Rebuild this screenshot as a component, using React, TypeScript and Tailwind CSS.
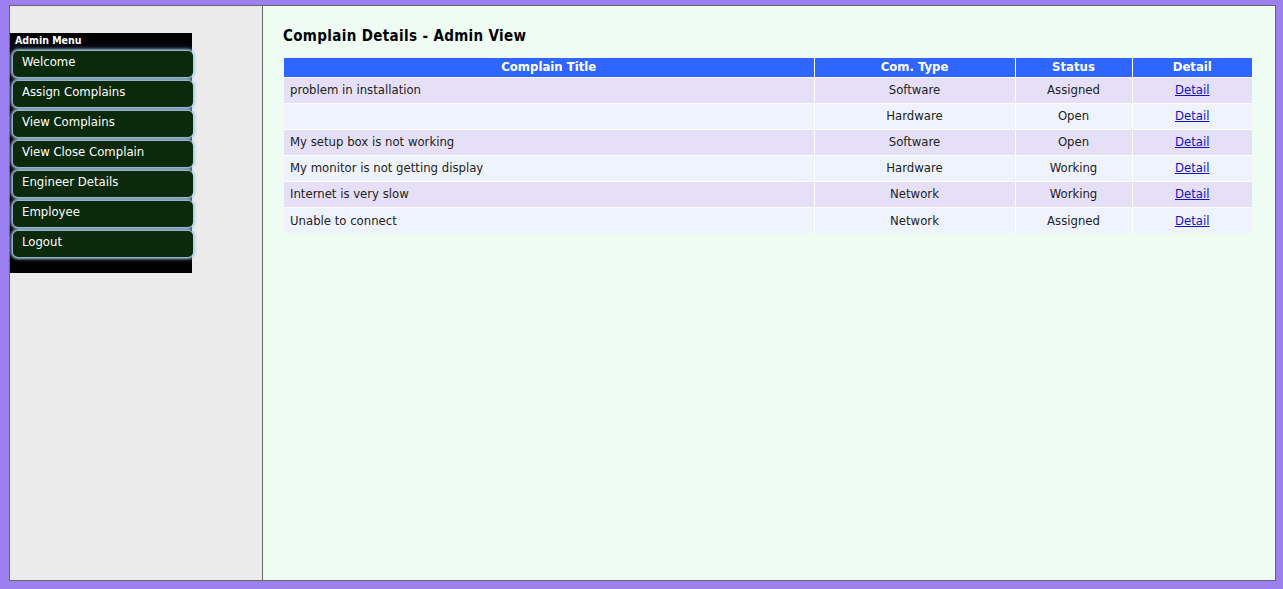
import React from "react";

const menu = [
  "Welcome",
  "Assign Complains",
  "View Complains",
  "View Close Complain",
  "Engineer Details",
  "Employee",
  "Logout",
];

const rows = [
  ["problem in installation", "Software", "Assigned"],
  ["", "Hardware", "Open"],
  ["My setup box is not working", "Software", "Open"],
  ["My monitor is not getting display", "Hardware", "Working"],
  ["Internet is very slow", "Network", "Working"],
  ["Unable to connect", "Network", "Assigned"],
];

const font = {
  fontFamily: '"DejaVu Sans Condensed", "Liberation Sans", sans-serif',
};

export default function App() {
  return (
    <div
      className="w-[1283px] h-[589px] bg-[#9c80f0] pt-[5px] pl-[9px] overflow-hidden"
      style={font}
    >
      <div className="flex w-[1267px] h-[576px] border border-[#666666]">
        <div className="w-[253px] shrink-0 bg-[#ebebeb] border-r border-[#666666] pt-[27px]">
          <div className="w-[182px] bg-black pb-[16px]">
            <div className="h-[15px] pl-[5px] text-[10.5px] leading-[15px] font-bold text-white bg-gradient-to-b from-black to-[#0a0a18]">
              Admin Menu
            </div>
            <div className="flex flex-col gap-[4px] mt-[3px]">
              {menu.map((m) => (
                <div
                  key={m}
                  className="ml-[3px] w-[180px] h-[26px] rounded-[5px] bg-[#0b2a0b] text-white text-[13px] leading-[17px] pt-[2px] pl-[9px] shadow-[0_0_3px_2px_#a9cdea]"
                >
                  {m}
                </div>
              ))}
            </div>
          </div>
        </div>
        <div className="flex-1 bg-[#effcf4] pt-[21px] pl-[20px]">
          <div className="text-[15px] font-bold text-black leading-[18px] tracking-[0.35px]">
            Complain Details - Admin View
          </div>
          <table className="mt-[13px] ml-[1px] w-[968px] border-collapse text-[13px] text-[#222]">
            <thead>
              <tr className="bg-[#2f66ff] text-white font-bold h-[19px]">
                <th className="w-[530px] border-r border-white font-bold leading-[18px] p-0">
                  Complain Title
                </th>
                <th className="w-[201px] border-r border-white font-bold leading-[18px] p-0">
                  Com. Type
                </th>
                <th className="w-[117px] border-r border-white font-bold leading-[18px] p-0">
                  Status
                </th>
                <th className="font-bold leading-[18px] p-0">Detail</th>
              </tr>
            </thead>
            <tbody>
              {rows.map((r, i) => (
                <tr
                  key={i}
                  className={
                    i % 2 === 0
                      ? "bg-[#e5e0f8] h-[26px]"
                      : "bg-[#eff3fd] h-[26px]"
                  }
                >
                  <td className="border-r border-t border-white pl-[6px] p-0">
                    {r[0]}
                  </td>
                  <td className="border-r border-t border-white text-center p-0">
                    {r[1]}
                  </td>
                  <td className="border-r border-t border-white text-center p-0">
                    {r[2]}
                  </td>
                  <td className="border-t border-white text-center p-0">
                    <a href="#" className="text-[#1010c8] underline">
                      Detail
                    </a>
                  </td>
                </tr>
              ))}
            </tbody>
          </table>
        </div>
      </div>
    </div>
  );
}
